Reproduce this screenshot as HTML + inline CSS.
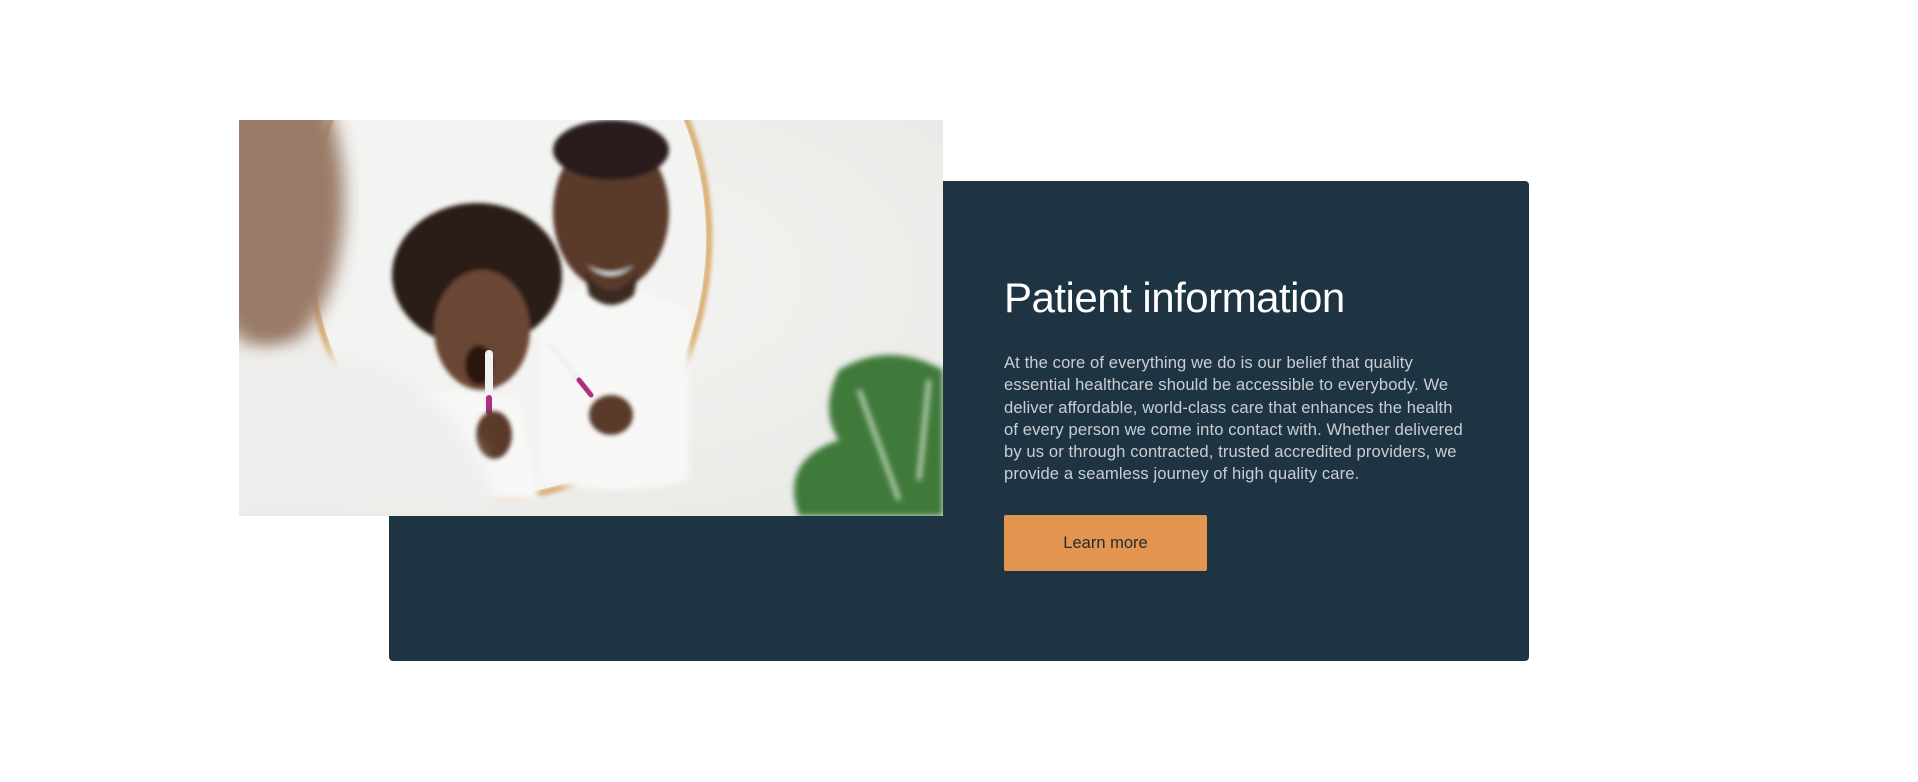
<!DOCTYPE html>
<html><head><meta charset="utf-8"><style>
html,body{margin:0;padding:0;background:#fff;}
body{width:1918px;height:782px;position:relative;overflow:hidden;font-family:"Liberation Sans",sans-serif;}
.card{position:absolute;left:389px;top:181px;width:1140px;height:480px;background:#1f3443;border-radius:4px;}
.img{position:absolute;left:239px;top:120px;width:704px;height:396px;overflow:hidden;background:#efefed;}
h1{position:absolute;left:1004px;top:273px;margin:0;font-weight:normal;font-size:42px;color:#fff;letter-spacing:-0.5px;line-height:50px;}
p{position:absolute;left:1004px;top:352px;margin:0;font-size:16.6px;letter-spacing:0.1px;line-height:22.3px;color:#c9ced3;white-space:nowrap;}
.btn{position:absolute;left:1004px;top:515px;width:203px;height:56px;background:#e3954f;border-radius:2px;color:#1f2a33;font-size:16.5px;line-height:56px;text-align:center;}
</style></head><body>
<div class="card"></div>
<div class="img">
<svg width="704" height="396" viewBox="0 0 704 396">
<defs>
<filter id="b8"><feGaussianBlur stdDeviation="9"/></filter>
<filter id="b3"><feGaussianBlur stdDeviation="3"/></filter>
<filter id="b1"><feGaussianBlur stdDeviation="2"/></filter>
<radialGradient id="bg" cx="0.5" cy="0.4" r="0.7"><stop offset="0" stop-color="#f4f4f2"/><stop offset="1" stop-color="#e9e9e6"/></radialGradient>
</defs>
<rect width="704" height="396" fill="url(#bg)"/>
<ellipse cx="270" cy="118" rx="200" ry="258" fill="none" stroke="#d9a86a" stroke-width="6" filter="url(#b1)"/>
<ellipse cx="270" cy="118" rx="197" ry="255" fill="#f3f3f1"/>
<path d="M300 180 Q370 150 450 190 L450 360 Q380 380 300 360 Z" fill="#f7f7f6" filter="url(#b3)"/>
<g filter="url(#b1)">
<ellipse cx="372" cy="92" rx="58" ry="78" fill="#5a3b2c"/>
<ellipse cx="372" cy="30" rx="58" ry="30" fill="#2b1f1a"/>
<path d="M345 150 Q372 190 400 150 L395 175 Q372 195 350 175Z" fill="#3a2a22"/>
<path d="M348 145 Q372 160 395 145 Q372 165 348 145Z" fill="#fff"/>
</g>
<path d="M150 290 Q200 260 280 280 L300 380 L150 380Z" fill="#f8f8f7" filter="url(#b3)"/>
<g filter="url(#b1)">
<ellipse cx="238" cy="155" rx="85" ry="72" fill="#2a1d18"/>
<ellipse cx="243" cy="210" rx="48" ry="60" fill="#6b4634"/>
<ellipse cx="240" cy="245" rx="14" ry="20" fill="#2a1510"/>
</g>
<rect x="246" y="230" width="8" height="70" rx="4" fill="#f2f2f2"/>
<rect x="247" y="275" width="6" height="20" rx="3" fill="#b0307e"/>
<ellipse cx="255" cy="315" rx="18" ry="24" fill="#5a3b2c" filter="url(#b1)"/>
<path d="M312 225 L352 275" stroke="#f2f2f2" stroke-width="7" stroke-linecap="round"/>
<path d="M340 260 L352 275" stroke="#b0307e" stroke-width="5" stroke-linecap="round"/>
<ellipse cx="372" cy="295" rx="22" ry="20" fill="#5a3b2c" filter="url(#b1)"/>
<ellipse cx="30" cy="80" rx="75" ry="150" fill="#9a7a68" filter="url(#b8)"/>
<path d="M-20 240 Q60 215 150 250 Q240 300 260 396 L-20 396Z" fill="#efeeec" filter="url(#b8)"/>
<path d="M600 250 Q650 220 704 250 L704 396 L560 396 Q540 340 600 320 Q580 290 600 250Z" fill="#3f7a3a" filter="url(#b3)"/>
<path d="M620 270 L660 380 M690 260 L680 360" stroke="#cfe0c8" stroke-width="4" filter="url(#b3)"/>
</svg>
</div>
<h1>Patient information</h1>
<p>At the core of everything we do is our belief that quality<br>essential healthcare should be accessible to everybody. We<br>deliver affordable, world-class care that enhances the health<br>of every person we come into contact with. Whether delivered<br>by us or through contracted, trusted accredited providers, we<br>provide a seamless journey of high quality care.</p>
<div class="btn">Learn more</div>
</body></html>
